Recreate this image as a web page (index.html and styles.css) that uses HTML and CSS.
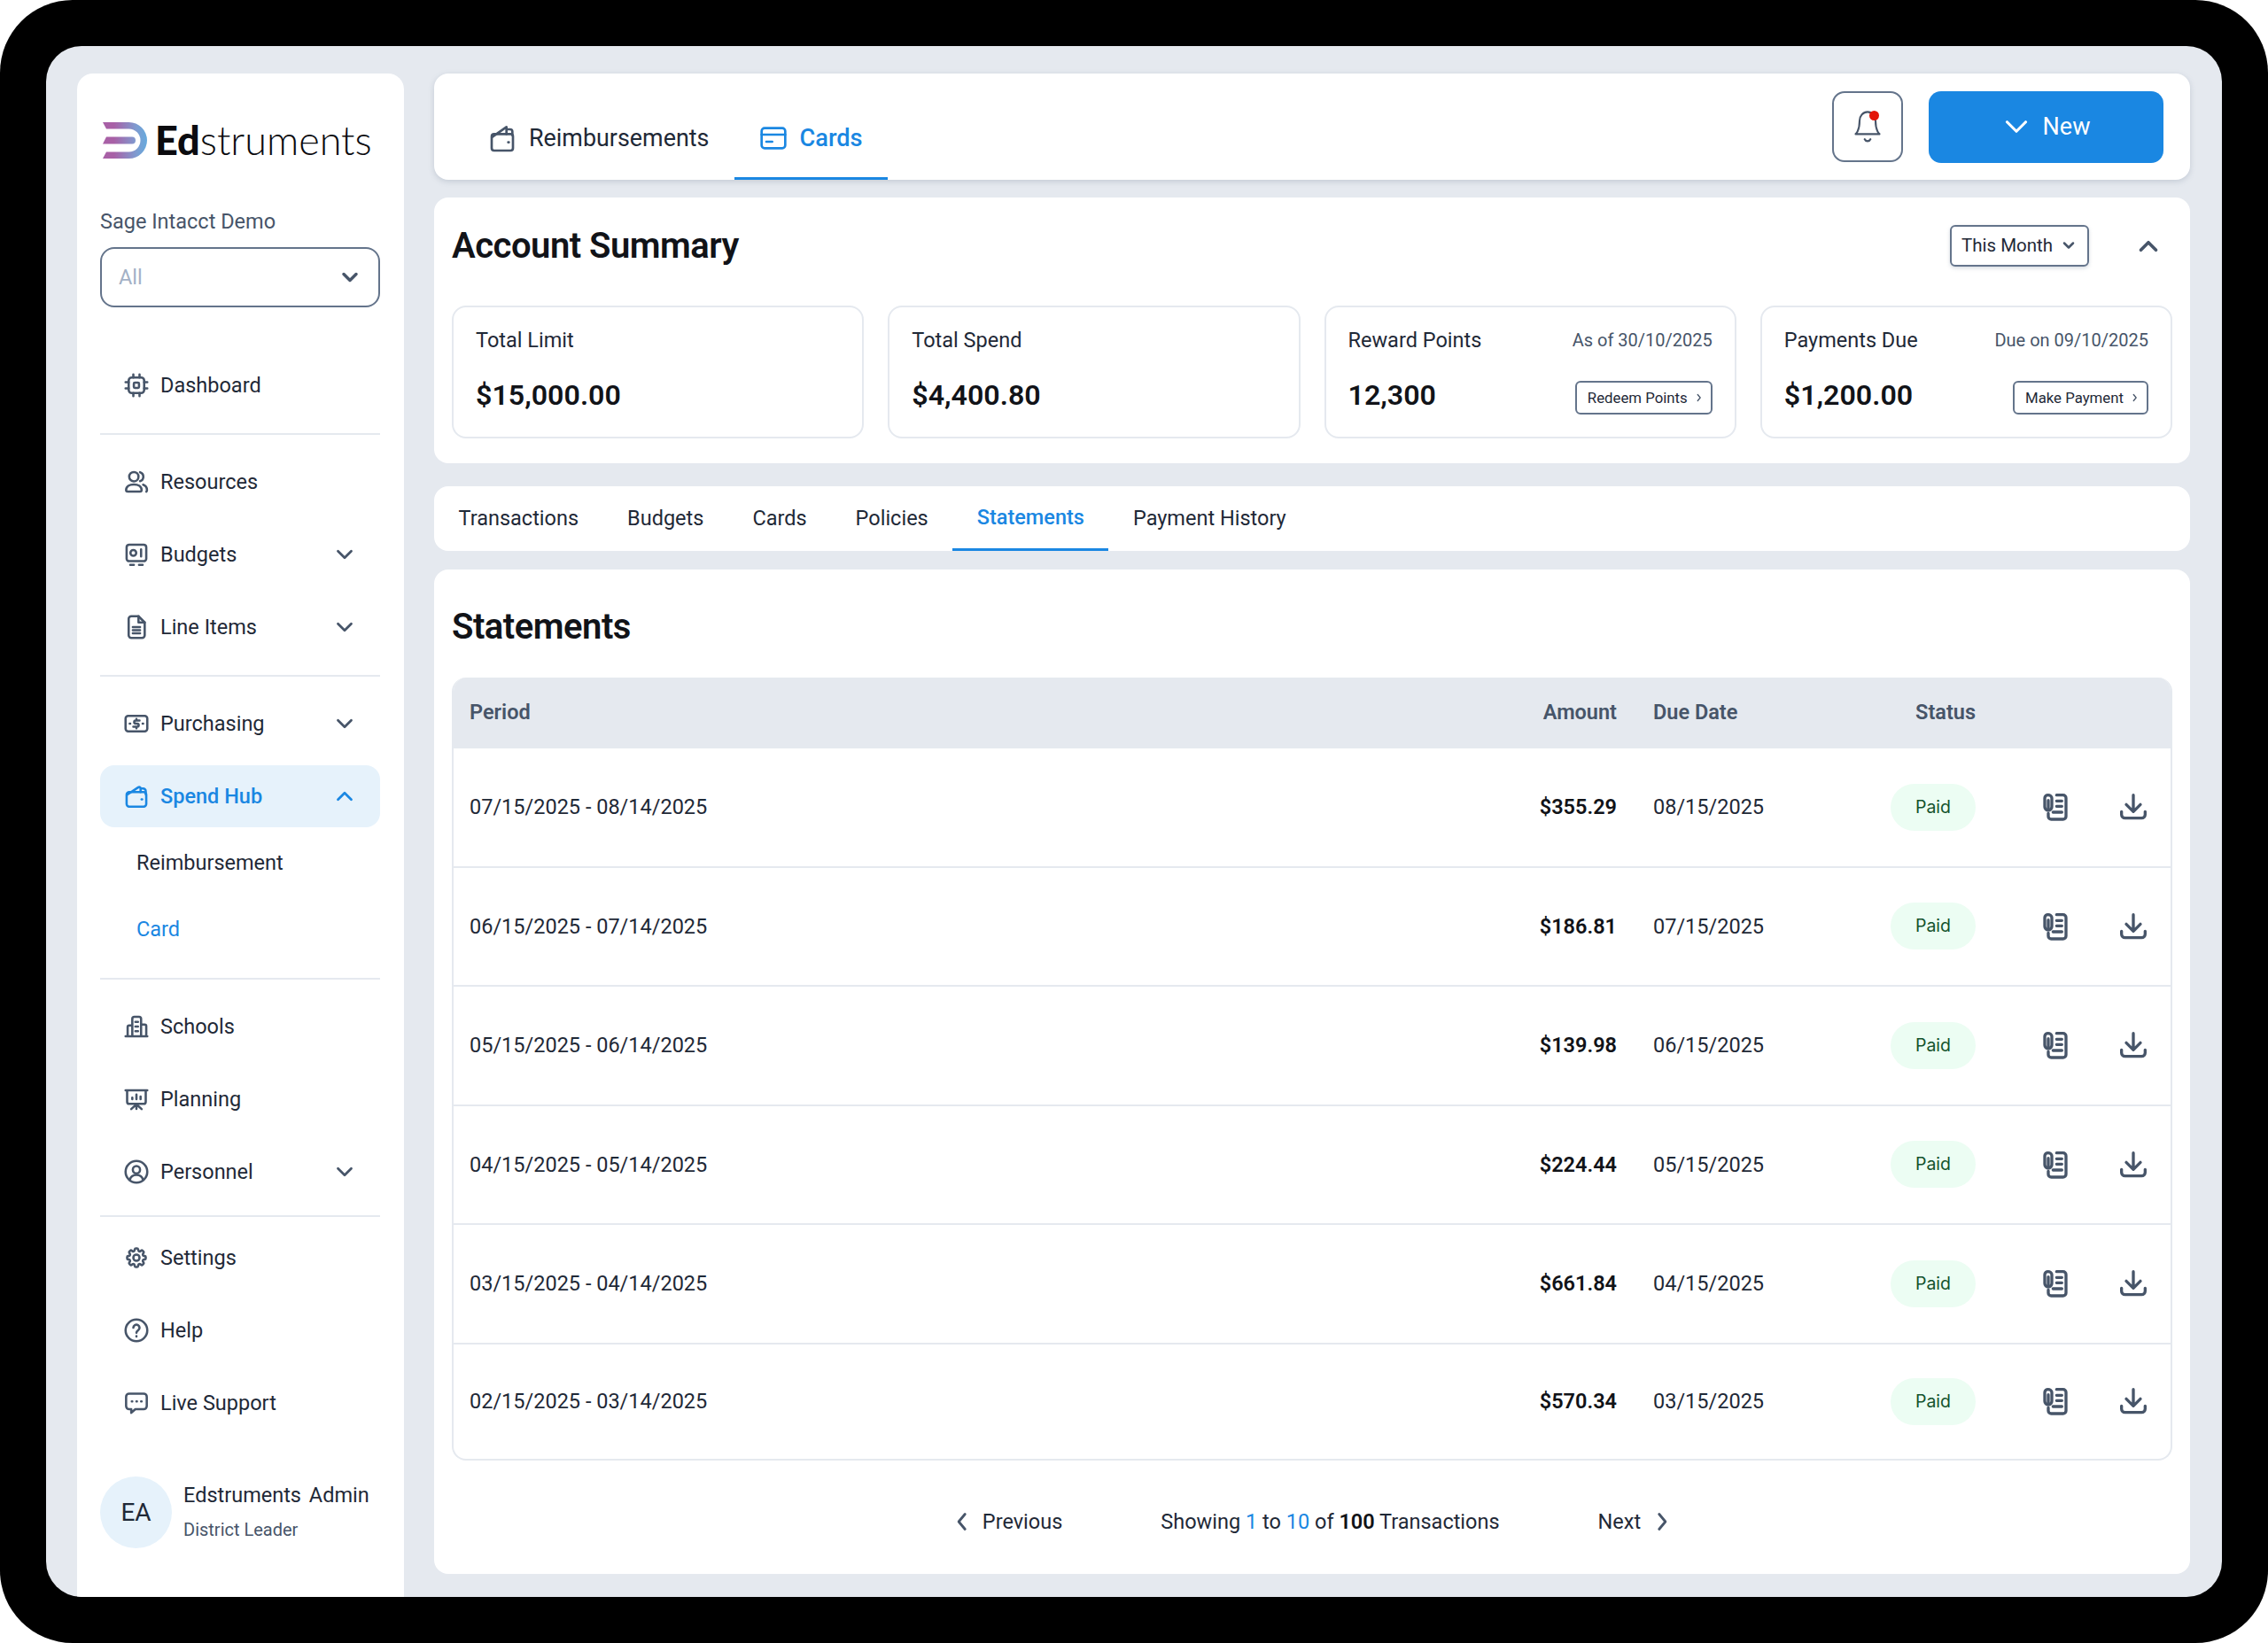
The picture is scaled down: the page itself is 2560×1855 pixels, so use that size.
FILE: index.html
```html
<!DOCTYPE html>
<html lang="en">
<head>
<meta charset="utf-8">
<title>Edstruments - Statements</title>
<link rel="stylesheet" href="styles.css">
</head>
<body>
<svg class="sprite" xmlns="http://www.w3.org/2000/svg">
  <symbol id="i-down" viewBox="0 0 24 24"><path d="M6 9l6 6 6-6"/></symbol>
  <symbol id="i-up" viewBox="0 0 24 24"><path d="M6 15l6-6 6 6"/></symbol>
  <symbol id="i-left" viewBox="0 0 24 24"><path d="M15 6l-5 6 5 6"/></symbol>
  <symbol id="i-right" viewBox="0 0 24 24"><path d="M9 6l5 6-5 6"/></symbol>
  <symbol id="i-chip" viewBox="0 0 24 24"><rect x="4.5" y="4.5" width="15" height="15" rx="3"/><rect x="9.5" y="9.5" width="5" height="5" rx="1"/><path d="M9 1.500v3M15 1.500v3M9 19.500v3M15 19.500v3M1.500 9h3M1.500 15h3M19.500 9h3M19.500 15h3"/></symbol>
  <symbol id="i-users" viewBox="0 0 24 24"><circle cx="9.5" cy="7" r="4.500"/><path d="M2 20c0-3.400 3.200-5.500 7.500-5.500S17 16.600 17 20c0 .8-.5 1.500-1.500 1.500h-12C2.500 21.500 2 20.800 2 20z"/><path d="M15.500 2.700a4.500 4.500 0 0 1 0 8.600M18.500 14.800c2.200.8 3.700 2.700 3.700 5.200 0 .6-.2 1.100-.6 1.500"/></symbol>
  <symbol id="i-safe" viewBox="0 0 24 24"><rect x="2.500" y="2.500" width="19" height="16" rx="2.500"/><circle cx="9" cy="10.500" r="2.800"/><path d="M16.500 7v7M6 22h3.500M14.500 22H18"/></symbol>
  <symbol id="i-doc" viewBox="0 0 24 24"><path d="M7 1.500h7l6 6V20a2.500 2.500 0 0 1-2.500 2.500h-10.500A2.500 2.500 0 0 1 4.500 20V4A2.500 2.500 0 0 1 7 1.500z"/><path d="M14 1.500V7.500h6M8.500 12h7M8.500 15h7M8.500 18h7"/></symbol>
  <symbol id="i-cash" viewBox="0 0 24 24"><rect x="1.500" y="4.500" width="21" height="15" rx="2.500"/><path d="M15 9h-3.700a1.500 1.500 0 0 0 0 3h1.400a1.500 1.500 0 0 1 0 3H9M12 7.500V9M12 15v1.500M5.500 12h.5M18 12h.5"/></symbol>
  <symbol id="i-wallet" viewBox="0 0 24 24"><rect x="2.500" y="8" width="19" height="14" rx="2.500"/><path d="M3 10.500L13.500 3.500c1.200-.8 2.500-.4 2.500 1.200V8M16 4.500h2.500A2.500 2.500 0 0 1 21 7v3"/><path d="M17 15h.5"/></symbol>
  <symbol id="i-purse" viewBox="0 0 24 24"><rect x="3" y="8.500" width="18" height="14" rx="2"/><path d="M3.500 11L15.500 2.500V8.500M15.500 4.500h3a2 2 0 0 1 2 2v3"/><path d="M17 15.500h.5"/></symbol>
  <symbol id="i-card" viewBox="0 0 24 24"><rect x="2" y="3.500" width="20" height="17" rx="2.500"/><path d="M2 9h20M6 15h5"/></symbol>
  <symbol id="i-school" viewBox="0 0 24 24"><path d="M1.500 21.500h21M8 21.500V4.500a2 2 0 0 1 2-2h4.500a2 2 0 0 1 2 2v17M8 11H5a1.500 1.500 0 0 0-1.500 1.500v9M16.500 10H20a1.500 1.500 0 0 1 1.500 1.500v10M11 7.500h2.500M11 12h2.500M11 16.500h2.500"/></symbol>
  <symbol id="i-board" viewBox="0 0 24 24"><path d="M1.500 3.500h21M3 3.500v11a2 2 0 0 0 2 2h14a2 2 0 0 0 2-2v-11M12 16.500v5M12 17l-5 4.500M12 17l5 4.500M8 12v-1.500M12 12V7.500M16 12V9.500"/></symbol>
  <symbol id="i-person" viewBox="0 0 24 24"><circle cx="12" cy="12" r="10.500"/><circle cx="12" cy="10" r="3.500"/><path d="M5.500 20c.8-3.200 3.400-5 6.500-5s5.700 1.800 6.500 5"/></symbol>
  <symbol id="i-gear" viewBox="0 0 24 24"><path d="M10.343 3.940c.09-.542.56-.94 1.110-.94h1.093c.55 0 1.020.398 1.110.94l.149.894c.07.424.384.764.78.93.398.164.855.142 1.205-.108l.737-.527a1.125 1.125 0 0 1 1.450.12l.773.774c.39.389.44 1.002.12 1.450l-.527.737c-.25.35-.272.806-.107 1.204.165.397.505.71.93.78l.893.15c.543.09.94.56.94 1.109v1.094c0 .55-.397 1.020-.94 1.110l-.893.149c-.425.07-.765.383-.93.78-.165.398-.143.854.107 1.204l.527.738c.32.447.269 1.060-.12 1.450l-.774.773a1.125 1.125 0 0 1-1.449.12l-.738-.527c-.35-.25-.806-.272-1.203-.107-.397.165-.71.505-.781.929l-.149.894c-.09.542-.56.94-1.110.94h-1.094c-.55 0-1.019-.398-1.110-.94l-.148-.894c-.071-.424-.384-.764-.781-.93-.398-.164-.854-.142-1.204.108l-.738.527c-.447.32-1.060.269-1.450-.12l-.773-.774a1.125 1.125 0 0 1-.12-1.450l.527-.737c.25-.35.273-.806.108-1.204-.165-.397-.505-.71-.93-.78l-.894-.15c-.542-.09-.94-.56-.94-1.109v-1.094c0-.55.398-1.020.94-1.110l.894-.149c.424-.07.765-.383.93-.78.165-.398.143-.854-.107-1.204l-.527-.738a1.125 1.125 0 0 1 .12-1.450l.773-.773a1.125 1.125 0 0 1 1.450-.12l.737.527c.35.25.807.272 1.204.107.397-.165.71-.505.78-.929l.15-.894z"/><circle cx="12" cy="12" r="3"/></symbol>
  <symbol id="i-help" viewBox="0 0 24 24"><circle cx="12" cy="12" r="10.500"/><path d="M9 9.500a3 3 0 1 1 4.500 2.600c-1 .6-1.500 1.100-1.500 2.200M12 17.500v.5"/></symbol>
  <symbol id="i-chat" viewBox="0 0 24 24"><path d="M5 3h14a3 3 0 0 1 3 3v9a3 3 0 0 1-3 3h-8l-4 3.500V18H5a3 3 0 0 1-3-3V6a3 3 0 0 1 3-3z"/><path d="M7.500 10.500h.5M12 10.500h.5M16.500 10.500h.5"/></symbol>
  <symbol id="i-clipdoc" viewBox="0 0 24 24"><path d="M13 2h5.500A2.500 2.500 0 0 1 21 4.500V20a2.500 2.500 0 0 1-2.500 2.500h-10A2.500 2.500 0 0 1 6 20v-2.500"/><path d="M6 6.500v6.500M3 4.500C3 3 4.300 2 5.800 2S9 3 9 4.500V12c0 1.800-1.300 3-3 3s-3-1.200-3-3z"/><path d="M13 7h4.500M13 11.500h4.500M10 16.500h7.500"/></symbol>
  <symbol id="i-download" viewBox="0 0 24 24"><path d="M12 2v13.500M6 10l6 6 6-6M2 16v2.500A3 3 0 0 0 5 21.500h14a3 3 0 0 0 3-3V16"/></symbol>
</svg>

<div class="device">
<div class="screen">

  <aside class="sidebar">
    <div class="logo">
      <svg class="logo-mark" viewBox="0 0 50 41" xmlns="http://www.w3.org/2000/svg">
        <defs><linearGradient id="logo-grad" gradientUnits="userSpaceOnUse" x1="0" y1="0" x2="50" y2="0"><stop offset="0.25" stop-color="#a860a6"/><stop offset="0.75" stop-color="#7f9bd0"/><stop offset="1" stop-color="#66aadd"/></linearGradient></defs>
        <path fill="url(#logo-grad)" d="M0 0H29.500A20.500 20.500 0 0 1 29.500 41H0L4 33.500H29.500A13 13 0 0 0 29.500 7.500H4z"/>
        <path fill="url(#logo-grad)" d="M4 16.500H33A4 4 0 0 1 33 24.500H0z"/>
      </svg>
      <span class="logo-name"><b>Ed</b>struments</span>
    </div>

    <div class="org-label">Sage Intacct Demo</div>
    <div class="org-select">
      <span>All</span>
      <svg class="ico heavy"><use href="#i-down"/></svg>
    </div>

    <nav class="nav">
      <a class="nav-item"><svg class="ico"><use href="#i-chip"/></svg><span>Dashboard</span></a>
      <hr class="nav-line">
      <a class="nav-item"><svg class="ico"><use href="#i-users"/></svg><span>Resources</span></a>
      <a class="nav-item"><svg class="ico"><use href="#i-safe"/></svg><span>Budgets</span><svg class="ico caret"><use href="#i-down"/></svg></a>
      <a class="nav-item"><svg class="ico"><use href="#i-doc"/></svg><span>Line Items</span><svg class="ico caret"><use href="#i-down"/></svg></a>
      <hr class="nav-line">
      <a class="nav-item"><svg class="ico"><use href="#i-cash"/></svg><span>Purchasing</span><svg class="ico caret"><use href="#i-down"/></svg></a>
      <a class="nav-item active"><svg class="ico"><use href="#i-wallet"/></svg><span>Spend Hub</span><svg class="ico caret"><use href="#i-up"/></svg></a>
      <a class="nav-sub">Reimbursement</a>
      <a class="nav-sub current">Card</a>
      <hr class="nav-line">
      <a class="nav-item"><svg class="ico"><use href="#i-school"/></svg><span>Schools</span></a>
      <a class="nav-item"><svg class="ico"><use href="#i-board"/></svg><span>Planning</span></a>
      <a class="nav-item"><svg class="ico"><use href="#i-person"/></svg><span>Personnel</span><svg class="ico caret"><use href="#i-down"/></svg></a>
      <hr class="nav-line tight">
      <a class="nav-item"><svg class="ico"><use href="#i-gear"/></svg><span>Settings</span></a>
      <a class="nav-item"><svg class="ico"><use href="#i-help"/></svg><span>Help</span></a>
      <a class="nav-item"><svg class="ico"><use href="#i-chat"/></svg><span>Live Support</span></a>
    </nav>

    <div class="user">
      <div class="avatar">EA</div>
      <div>
        <div class="user-name">Edstruments Admin</div>
        <div class="user-role">District Leader</div>
      </div>
    </div>
  </aside>

  <main class="main">
    <header class="panel topbar">
      <div class="top-tabs">
        <a class="top-tab"><svg class="ico ico-lg"><use href="#i-purse"/></svg>Reimbursements</a>
        <a class="top-tab active"><svg class="ico ico-lg"><use href="#i-card"/></svg>Cards</a>
      </div>
      <button class="bell-btn">
        <svg class="ico bell" viewBox="0 0 24 24" preserveAspectRatio="none"><path d="M6 8a6 6 0 0 1 12 0c0 7 3 9 3 9H3s3-2 3-9"/><path d="M9.800 20.500a2.500 2.500 0 0 0 4.400 0"/></svg>
        <span class="bell-dot"></span>
      </button>
      <button class="new-btn"><svg class="ico"><use href="#i-down"/></svg>New</button>
    </header>

    <section class="panel summary">
      <div class="summary-head">
        <h1 class="title">Account Summary</h1>
        <button class="range-btn">This Month<svg class="ico ico-xs heavy"><use href="#i-down"/></svg></button>
        <svg class="ico collapse"><use href="#i-up"/></svg>
      </div>
      <div class="cards">
        <div class="stat">
          <div class="stat-row"><span class="stat-label">Total Limit</span></div>
          <div class="stat-row"><span class="stat-value">$15,000.00</span></div>
        </div>
        <div class="stat">
          <div class="stat-row"><span class="stat-label">Total Spend</span></div>
          <div class="stat-row"><span class="stat-value">$4,400.80</span></div>
        </div>
        <div class="stat">
          <div class="stat-row"><span class="stat-label">Reward Points</span><span class="stat-note">As of 30/10/2025</span></div>
          <div class="stat-row"><span class="stat-value">12,300</span><button class="mini-btn">Redeem Points<svg class="ico ico-xxs"><use href="#i-right"/></svg></button></div>
        </div>
        <div class="stat">
          <div class="stat-row"><span class="stat-label">Payments Due</span><span class="stat-note">Due on 09/10/2025</span></div>
          <div class="stat-row"><span class="stat-value">$1,200.00</span><button class="mini-btn">Make Payment<svg class="ico ico-xxs"><use href="#i-right"/></svg></button></div>
        </div>
      </div>
    </section>

    <nav class="panel sub-tabs">
      <a class="sub-tab">Transactions</a>
      <a class="sub-tab">Budgets</a>
      <a class="sub-tab">Cards</a>
      <a class="sub-tab">Policies</a>
      <a class="sub-tab active">Statements</a>
      <a class="sub-tab">Payment History</a>
    </nav>

    <section class="panel statements">
      <h2 class="title">Statements</h2>
      <div class="table">
        <div class="tr th">
          <div>Period</div><div class="amt">Amount</div><div class="due">Due Date</div><div class="status">Status</div><div></div>
        </div>
        <div class="tr">
          <div>07/15/2025 - 08/14/2025</div><div class="amt">$355.29</div><div class="due">08/15/2025</div><div class="status"><span class="paid">Paid</span></div>
          <div class="acts"><svg class="ico act"><use href="#i-clipdoc"/></svg><svg class="ico act"><use href="#i-download"/></svg></div>
        </div>
        <div class="tr">
          <div>06/15/2025 - 07/14/2025</div><div class="amt">$186.81</div><div class="due">07/15/2025</div><div class="status"><span class="paid">Paid</span></div>
          <div class="acts"><svg class="ico act"><use href="#i-clipdoc"/></svg><svg class="ico act"><use href="#i-download"/></svg></div>
        </div>
        <div class="tr">
          <div>05/15/2025 - 06/14/2025</div><div class="amt">$139.98</div><div class="due">06/15/2025</div><div class="status"><span class="paid">Paid</span></div>
          <div class="acts"><svg class="ico act"><use href="#i-clipdoc"/></svg><svg class="ico act"><use href="#i-download"/></svg></div>
        </div>
        <div class="tr">
          <div>04/15/2025 - 05/14/2025</div><div class="amt">$224.44</div><div class="due">05/15/2025</div><div class="status"><span class="paid">Paid</span></div>
          <div class="acts"><svg class="ico act"><use href="#i-clipdoc"/></svg><svg class="ico act"><use href="#i-download"/></svg></div>
        </div>
        <div class="tr">
          <div>03/15/2025 - 04/14/2025</div><div class="amt">$661.84</div><div class="due">04/15/2025</div><div class="status"><span class="paid">Paid</span></div>
          <div class="acts"><svg class="ico act"><use href="#i-clipdoc"/></svg><svg class="ico act"><use href="#i-download"/></svg></div>
        </div>
        <div class="tr last">
          <div>02/15/2025 - 03/14/2025</div><div class="amt">$570.34</div><div class="due">03/15/2025</div><div class="status"><span class="paid">Paid</span></div>
          <div class="acts"><svg class="ico act"><use href="#i-clipdoc"/></svg><svg class="ico act"><use href="#i-download"/></svg></div>
        </div>
      </div>
      <div class="pager">
        <a class="pager-link prev"><svg class="ico"><use href="#i-left"/></svg>Previous</a>
        <div>Showing <em>1</em> to <em>10</em> of <b>100</b> Transactions</div>
        <a class="pager-link next">Next<svg class="ico"><use href="#i-right"/></svg></a>
      </div>
    </section>
  </main>

</div>
</div>
</body>
</html>
```

FILE: styles.css
```css
html, body { margin: 0; padding: 0; background: #fff; }
body { font-family: "Roboto", "Liberation Sans", sans-serif; font-size: 23.5px; color: #1f2937; }
a { color: inherit; text-decoration: none; }
button { font-family: inherit; color: inherit; background: #fff; cursor: pointer; padding: 0; }
.sprite { display: none; }

.ico { width: 28px; height: 28px; flex: none; fill: none; stroke: #475569; stroke-width: 2.2; stroke-linecap: round; stroke-linejoin: round; }
.ico-lg { width: 32px; height: 32px; stroke-width: 2; }
.ico-xs { width: 20px; height: 20px; }
.ico-xxs { width: 14px; height: 14px; }
.heavy { stroke-width: 3; }

/* device frame */
.device { width: 2560px; height: 1855px; box-sizing: border-box; padding: 52px; background: #000; border-radius: 82px; }
.screen { height: 1751px; box-sizing: border-box; display: flex; gap: 34px; padding: 31px 36px 0 35px; background: #e5e9ef; border-radius: 40px; overflow: hidden; }

/* sidebar */
.sidebar { width: 369px; flex: none; box-sizing: border-box; padding: 55px 27px 0 26px; background: #fff; border-radius: 18px 18px 0 0; }
.logo { display: flex; align-items: center; gap: 9px; height: 41px; padding-left: 3px; }
.logo-mark { width: 50px; height: 41px; flex: none; }
.logo-name { font-family: "Lato", sans-serif; font-size: 45px; font-weight: 300; color: #0b0b0f; line-height: 41px; white-space: nowrap; }
.logo-name b { font-weight: 900; }
.org-label { margin-top: 54px; line-height: 34px; color: #475569; }
.org-select { margin-top: 12px; height: 68px; box-sizing: border-box; display: flex; align-items: center; justify-content: space-between; padding: 0 18px 0 19px; border: 2px solid #64748b; border-radius: 16px; color: #a3b1c6; background: #fff; }

.nav { margin-top: 53px; }
.nav-item { display: flex; align-items: center; gap: 13px; height: 70px; margin-bottom: 12px; padding: 0 27px; border-radius: 16px; color: #1f2937; }
.nav-item:last-child { margin-bottom: 0; }
.nav-item .caret { margin-left: auto; margin-right: -2px; width: 30px; height: 30px; }
.nav-item.active { margin-bottom: 5px; background: #e6f2fb; color: #1a87e2; font-weight: 500; }
.nav-item.active .ico { stroke: #1a87e2; }
.nav-line { height: 2px; margin: 19px 0 18px; border: 0; background: #e5e9ef; }
.nav-line.tight { margin: 14px 0 11px; }
.nav-sub { display: block; height: 70px; line-height: 70px; margin-top: 5px; padding-left: 41px; color: #1f2937; }
.nav-sub.current { color: #1a87e2; }
.nav-sub + .nav-line { margin-top: 20px; }

.user { display: flex; align-items: center; gap: 13px; margin-top: 48px; }
.avatar { width: 81px; height: 81px; flex: none; border-radius: 50%; background: #e6f2fb; display: flex; align-items: center; justify-content: center; font-size: 28px; color: #1f2937; }
.user-name { margin-top: -2px; line-height: 30px; word-spacing: 3px; white-space: nowrap; }
.user-role { margin-top: 11px; font-size: 20px; line-height: 26px; color: #475569; }

/* main column */
.main { flex: 1; min-width: 0; display: flex; flex-direction: column; gap: 20px; }
.panel { background: #fff; border-radius: 16px; }
.title { margin: 0; font-size: 40px; font-weight: 600; line-height: 48px; color: #111318; letter-spacing: -0.5px; }

.topbar { height: 120px; flex: none; display: flex; align-items: center; padding: 0 30px 0 46px; box-shadow: 0 2px 6px rgba(100, 116, 139, 0.25); }
.top-tabs { display: flex; align-self: stretch; margin-right: auto; }
.top-tab { display: flex; align-items: center; gap: 14px; padding: 25px 15px 0; font-size: 26.9px; color: #1f2937; }
.top-tab:first-child { margin-right: 13px; }
.top-tab.active { padding: 28px 28px 0; font-size: 27.2px; color: #1a87e2; font-weight: 500; border-bottom: 3px solid #1a87e2; }
.top-tab.active .ico { stroke: #1a87e2; }
.bell-btn { position: relative; width: 80px; height: 80px; display: flex; align-items: center; justify-content: center; border: 2px solid #64748b; border-radius: 14px; margin-right: 29px; }
.bell { width: 36px; height: 40px; stroke-width: 1.4; }
.bell-dot { position: absolute; left: 40px; top: 20px; width: 11px; height: 11px; border-radius: 50%; background: #e3170a; }
.new-btn { width: 265px; height: 81px; display: flex; align-items: center; justify-content: center; gap: 9px; padding-right: 5px; border: 0; border-radius: 14px; background: #1a87e2; color: #fff; font-size: 27px; }
.new-btn .ico { width: 42px; height: 42px; stroke: #fff; stroke-width: 1.8; }

.summary { flex: none; height: 300px; box-sizing: border-box; padding: 31px 20px 0; margin-bottom: 6px; }
.summary-head { display: flex; align-items: center; height: 48px; }
.range-btn { margin-left: auto; height: 47px; width: 157px; margin-top: -2px; display: flex; align-items: center; justify-content: center; gap: 8px; border: 2px solid #64748b; border-radius: 6px; font-size: 20.5px; color: #1f2937; box-shadow: 0 2px 4px rgba(100, 116, 139, 0.25); }
.collapse { width: 34px; height: 34px; margin-left: 50px; margin-right: 10px; stroke-width: 2.6; }
.cards { display: grid; grid-template-columns: repeat(4, 1fr); gap: 27px; margin-top: 43px; }
.stat { height: 150px; box-sizing: border-box; padding: 20px 25px 0; border: 2px solid #e5e9ef; border-radius: 16px; }
.stat-row { display: flex; align-items: center; justify-content: space-between; height: 34px; }
.stat-row + .stat-row { margin-top: 20px; height: 50px; }
.stat-label { color: #1f2937; }
.stat-note { font-size: 20px; color: #475569; }
.stat-value { font-size: 32.2px; font-weight: 600; color: #111318; }
.mini-btn { height: 38px; margin-top: 6px; display: flex; align-items: center; gap: 6px; padding: 0 6px 0 12px; border: 2px solid #64748b; border-radius: 6px; font-size: 16.8px; color: #1f2937; white-space: nowrap; }

.sub-tabs { flex: none; height: 73px; display: flex; }
.sub-tab { display: flex; align-items: center; padding: 0 27.5px 2px; color: #1f2937; box-sizing: border-box; }
.sub-tab.active { padding-bottom: 0; color: #1a87e2; font-weight: 500; border-bottom: 3px solid #1a87e2; }

.statements { flex: 1; box-sizing: border-box; padding: 41px 20px 0; margin-top: 1px; margin-bottom: 28px; }
.statements .title { height: 48px; }
.table { margin-top: 33px; border: 2px solid #e5e9ef; border-top: 0; border-radius: 16px; overflow: hidden; }
.tr { display: grid; grid-template-columns: 1fr 140px 309px 96px 220px; align-items: center; height: 134.5px; box-sizing: border-box; padding-left: 18px; border-bottom: 2px solid #e5e9ef; }
.tr.last { border-bottom: 0; height: 129px; }
.tr.th { height: 80px; margin: 0 -2px; padding: 0 2px 3px 20px; background: #e5e9ef; border-bottom: 0; font-weight: 600; color: #475569; }
.amt { text-align: right; font-weight: 600; color: #111318; }
.th .amt { color: #475569; }
.due { padding-left: 41px; }
.status { text-align: right; }
.paid { display: block; height: 53px; line-height: 53px; text-align: center; border-radius: 27px; background: #ecfdf3; color: #14532d; font-family: "Inter", sans-serif; font-size: 19.5px; }
.acts { display: flex; justify-content: flex-end; margin-right: -2px; }
.act { width: 32px; height: 32px; padding: 0 28px; stroke-width: 2.5; }

.pager { display: flex; align-items: center; justify-content: center; gap: 111px; height: 128px; box-sizing: border-box; padding-top: 10px; color: #1f2937; }
.pager-link { display: flex; align-items: center; }
.pager-link .ico { width: 34px; height: 34px; stroke-width: 2; }
.prev { gap: 7px; }
.next { gap: 8px; }
.pager em { font-style: normal; color: #1a87e2; }
.pager b { font-weight: 600; color: #111318; }
```
